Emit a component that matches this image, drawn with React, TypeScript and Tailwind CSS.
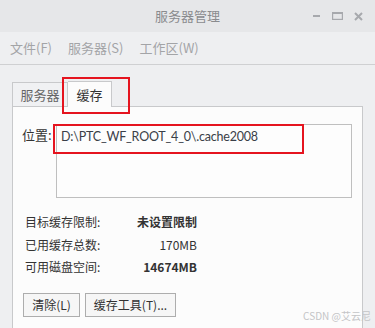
const font = "font-['Microsoft_YaHei','Noto_Sans_CJK_SC',sans-serif]";

function WindowControls() {
  return (
    <div className="flex items-center gap-[11px] pr-[12px]">
      <svg width="8" height="10" viewBox="0 0 8 10">
        <rect x="0" y="4" width="7" height="2" fill="#a7a9ad" />
      </svg>
      <svg width="11" height="10" viewBox="0 0 11 10">
        <rect x="0.6" y="1.6" width="9.8" height="6.8" fill="none" stroke="#a7a9ad" strokeWidth="1.2" />
        <rect x="0" y="1" width="11" height="2" fill="#a7a9ad" />
      </svg>
      <svg width="9" height="9" viewBox="0 0 9 9">
        <path d="M1 1L8 8M8 1L1 8" stroke="#a7a9ad" strokeWidth="2" />
      </svg>
    </div>
  );
}

const stats = [
  { label: "目标缓存限制:", value: "未设置限制", bold: true },
  { label: "已用缓存总数:", value: "170MB", bold: false },
  { label: "可用磁盘空间:", value: "14674MB", bold: true },
];

export default function App() {
  return (
    <div className={`relative h-[328px] w-[375px] overflow-hidden bg-[#eeeff1] ${font}`}>
      {/* Title bar */}
      <div className="flex h-[32px] items-center bg-[#e6e7e9]">
        <div className="w-[80px]" />
        <div className="flex-1 text-center text-[13px] text-[#8a8b8e]">服务器管理</div>
        <div className="flex w-[80px] justify-end">
          <WindowControls />
        </div>
      </div>

      {/* Menu */}
      <div className="flex h-[33px] items-center gap-[16px] border-b border-[#cfd0d2] pl-[10px] text-[13px] text-[#a3a4a7]">
        <span>文件(F)</span>
        <span>服务器(S)</span>
        <span>工作区(W)</span>
      </div>

      <div className="px-[12px] pt-[16px]">
        {/* Tabs */}
        <div className="flex items-end">
          <div className="flex h-[24px] w-[56px] items-center justify-center border border-b-0 border-[#c8c9cb] bg-[#f0f1f3] text-[13px] text-[#666]">
            服务器
          </div>
          <div className="relative -mb-px z-10 flex h-[26px] w-[44px] items-center justify-center border border-b-0 border-l-0 border-[#c8c9cb] bg-[#fcfcfc] text-[13px] text-[#333]">
            缓存
            <div className="absolute -left-[6px] -top-[5px] h-[37px] w-[68px] border-2 border-[#e5141f]" />
          </div>
        </div>

        {/* Panel */}
        <div className="h-[240px] border border-[#c8c9cb] bg-[#fcfcfc] pl-[9px] pt-[17px] text-[#333]">
          <div className="flex">
            <span className="w-[34px] pt-[1px] text-[13px] leading-[20px]">位置:</span>
            <div className="relative h-[74px] w-[296px] border border-[#bfbfbf] bg-[#fdfdfd] pl-[4px] pt-[2px] font-['Lato',sans-serif] text-[12.5px] leading-[20px] tracking-[-0.2px] text-[#3a3f48]">
              D:\PTC_WF_ROOT_4_0\.cache2008
              <div className="absolute -left-[4px] -top-[1px] h-[30px] w-[251px] border-2 border-[#e5141f]" />
            </div>
          </div>

          <div className="mt-[13px] flex w-[175px] flex-col pl-[3px] text-[12px]">
            {stats.map((s) => (
              <div key={s.label} className="flex h-[22.5px] items-center justify-between">
                <span>{s.label}</span>
                <span className={s.bold ? "font-bold" : ""}>{s.value}</span>
              </div>
            ))}
          </div>

          <div className="mt-[14px] flex gap-[5px] pl-[1px] text-[12px]">
            <button className="h-[24px] w-[57px] border border-[#adadad] bg-[#f6f6f6]">清除(L)</button>
            <button className="h-[24px] w-[91px] border border-[#adadad] bg-[#f6f6f6]">缓存工具(T)...</button>
          </div>
        </div>
      </div>

      <div className="absolute bottom-[5px] right-[4px] text-[10px] text-[#c4c5c7]">CSDN @艾云尼</div>
    </div>
  );
}
